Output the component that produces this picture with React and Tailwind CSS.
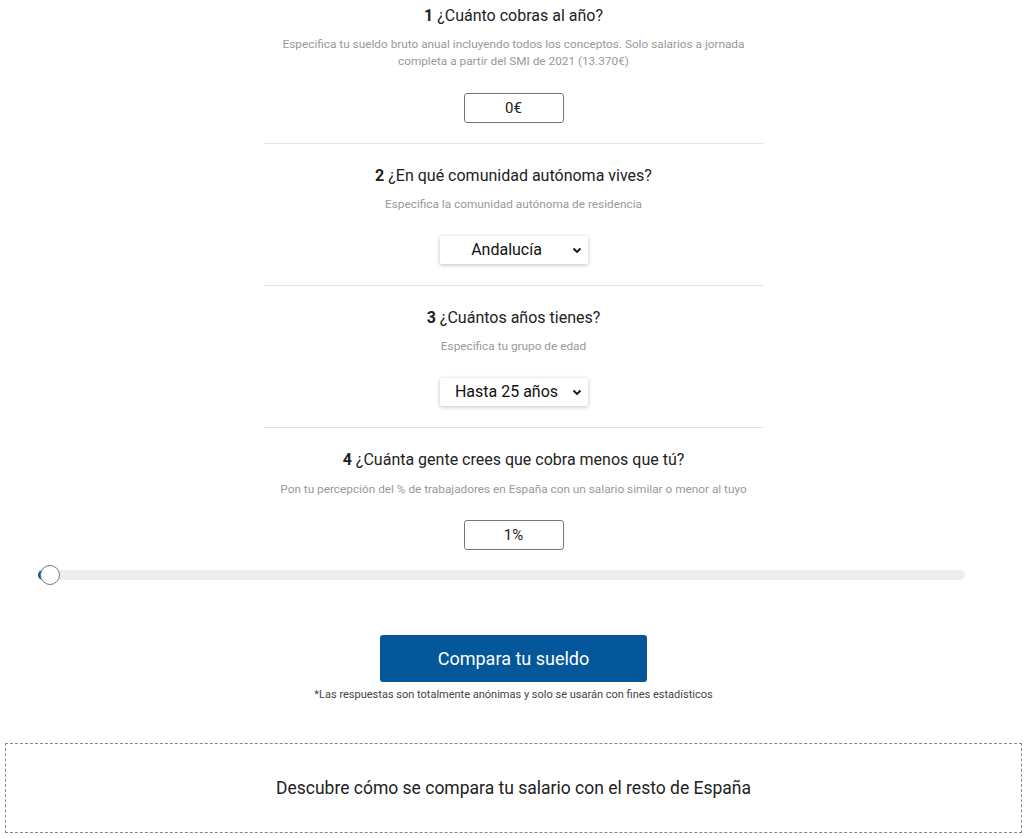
import React from "react";

function Chevron() {
  return (
    <svg width="10" height="7" viewBox="0 0 10 7" className="absolute right-[6px] top-[11px]">
      <path d="M1.5 1.5 L5 5 L8.5 1.5" fill="none" stroke="#111" strokeWidth="1.8" />
    </svg>
  );
}

function Title({ n, children }) {
  return (
    <div className="text-[16px] leading-[20px] text-[#222] text-center">
      <span className="font-bold">{n}</span> {children}
    </div>
  );
}

function Desc({ children }) {
  return <div className="text-[11.8px] leading-[17px] text-[#999] text-center">{children}</div>;
}

function TextBox({ value }) {
  return (
    <div className="w-[100px] h-[30px] border border-[#777] rounded-[3px] flex items-center justify-center text-[15px] text-[#222]">
      {value}
    </div>
  );
}

function SelectBox({ value }) {
  return (
    <div className="relative w-[148px] h-[28px] bg-white rounded-[2px] shadow-[0_1px_4px_rgba(0,0,0,0.25)] flex items-center pl-[4px] pr-[18px] justify-center text-[16px] text-[#111]">
      {value}
      <Chevron />
    </div>
  );
}

export default function App() {
  return (
    <div className="w-[1027px] h-[838px] bg-white overflow-hidden" style={{ fontFamily: "Roboto, 'Noto Sans', sans-serif" }}>
      <div className="w-[500px] mx-auto">
        <div className="h-[144px] border-b border-[#e5e5e5] pt-[6px] flex flex-col items-center">
          <Title n="1">¿Cuánto cobras al año?</Title>
          <div className="mt-[10px] w-[470px]">
            <Desc>Especifica tu sueldo bruto anual incluyendo todos los conceptos. Solo salarios a jornada completa a partir del SMI de 2021 (13.370€)</Desc>
          </div>
          <div className="mt-[23px]"><TextBox value="0€" /></div>
        </div>
        <div className="h-[142px] border-b border-[#e5e5e5] pt-[22px] flex flex-col items-center">
          <Title n="2">¿En qué comunidad autónoma vives?</Title>
          <div className="mt-[10px]"><Desc>Especifica la comunidad autónoma de residencia</Desc></div>
          <div className="mt-[23px]"><SelectBox value="Andalucía" /></div>
        </div>
        <div className="h-[142px] border-b border-[#e5e5e5] pt-[22px] flex flex-col items-center">
          <Title n="3">¿Cuántos años tienes?</Title>
          <div className="mt-[10px]"><Desc>Especifica tu grupo de edad</Desc></div>
          <div className="mt-[23px]"><SelectBox value="Hasta 25 años" /></div>
        </div>
        <div className="pt-[22px] flex flex-col items-center">
          <Title n="4">¿Cuánta gente crees que cobra menos que tú?</Title>
          <div className="mt-[11px] whitespace-nowrap"><Desc>Pon tu percepción del % de trabajadores en España con un salario similar o menor al tuyo</Desc></div>
          <div className="mt-[22px]"><TextBox value="1%" /></div>
        </div>
      </div>
      <div className="mt-[20px] ml-[38px] w-[927px] h-[10px] bg-[#ededed] rounded-full relative">
        <div className="absolute left-0 top-0 h-[10px] w-[8px] bg-[#0a5a9a] rounded-l-full" />
        <div className="absolute left-[2px] top-[-5px] w-[20px] h-[20px] rounded-full bg-white border border-[#777]" />
      </div>
      <div className="mt-[55px] flex flex-col items-center">
        <div className="w-[267px] h-[47px] bg-[#03579a] rounded-[3px] flex items-center justify-center text-white text-[18px]">
          Compara tu sueldo
        </div>
        <div className="mt-[6px] text-[11px] leading-[14px] text-[#444]">*Las respuestas son totalmente anónimas y solo se usarán con fines estadísticos</div>
      </div>
      <div className="mt-[41px] mx-[5px] h-[90px] border border-dashed border-[#888] flex items-center justify-center text-[17.5px] text-[#222]">
        Descubre cómo se compara tu salario con el resto de España
      </div>
    </div>
  );
}
